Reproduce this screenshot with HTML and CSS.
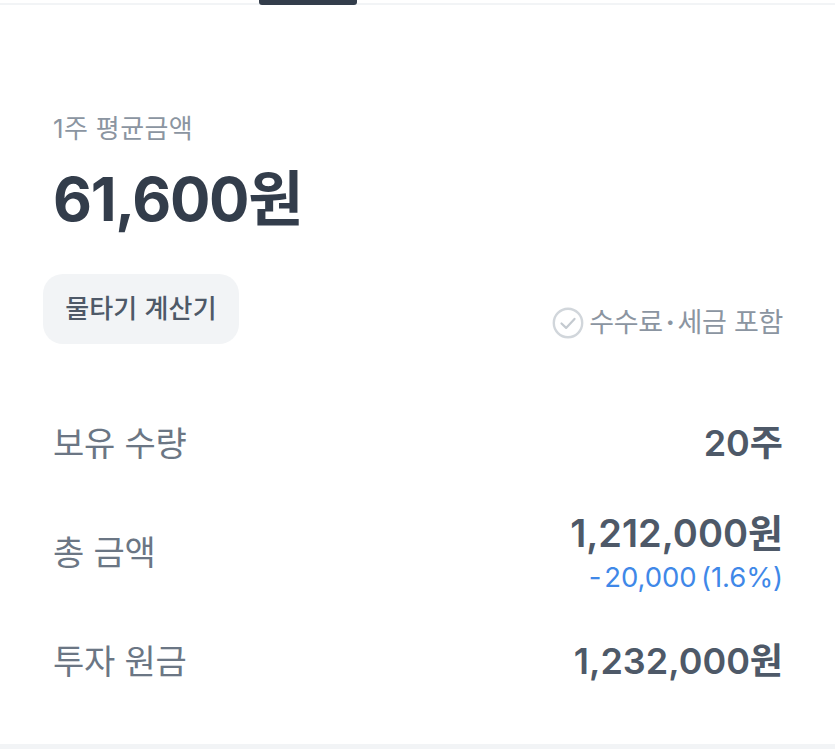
FILE: index.html
```html
<!DOCTYPE html>
<html lang="ko">
<head>
<meta charset="utf-8">
<title>1주 평균금액</title>
<link rel="stylesheet" href="styles.css">
</head>
<body>
<div class="page">
  <div class="tabbar"><div class="tab-indicator"></div></div>
  <main class="content">
    <div class="label">1주 평균금액</div>
    <div class="price">61,600원</div>
    <div class="actions">
      <button class="calc-btn">물타기 계산기</button>
      <div class="fee">
        <svg class="fee-icon" width="32" height="32" viewBox="0 0 32 32" aria-hidden="true"><circle cx="16" cy="16" r="14.2" fill="none" stroke="#d1d6db" stroke-width="2.4"/><path d="M9.5 16.5l4.6 4.4 8.4-9" fill="none" stroke="#c4cad0" stroke-width="2.2" stroke-linecap="round" stroke-linejoin="round"/></svg>
        <span>수수료<span class="fee-dot">·</span>세금 포함</span>
      </div>
    </div>
    <div class="rows">
      <div class="row row-qty">
        <div class="row-label">보유 수량</div>
        <div class="row-value">20주</div>
      </div>
      <div class="row row-total">
        <div class="row-label">총 금액</div>
        <div class="value-stack">
          <div class="row-value">1,212,000원</div>
          <div class="delta"><span class="delta-sign">-</span>20,000 (1.6%)</div>
        </div>
      </div>
      <div class="row row-principal">
        <div class="row-label">투자 원금</div>
        <div class="row-value">1,232,000원</div>
      </div>
    </div>
  </main>
  <div class="divider"></div>
</div>
</body>
</html>
```

FILE: styles.css
```css
* { box-sizing: border-box; }
html, body { margin: 0; padding: 0; background: #fff; }
body { font-family: Inter, "Noto Sans CJK KR", sans-serif; }
.page { width: 835px; height: 749px; display: flex; flex-direction: column; overflow: hidden; }
.tabbar { height: 5px; flex: none; padding-left: 259px; border-bottom: 2px solid #f2f4f6; }
.tab-indicator { width: 98px; height: 5px; background: #333d4b; border-radius: 0 0 3px 3px; }
.content { flex: 1; padding: 108px 52px 0 53px; }
.label { font-size: 26px; line-height: 32px; color: #8b95a1; letter-spacing: 0.35px; }
.price { margin-top: 18px; font-size: 60px; line-height: 72px; font-weight: 700; color: #333d4b; letter-spacing: -1.3px; }
.actions { margin-top: 39px; margin-left: -10px; display: flex; justify-content: space-between; align-items: flex-end; }
.calc-btn { width: 196px; height: 70px; border: 0; border-radius: 20px; background: #f2f4f6; color: #4e5968; font-family: inherit; font-size: 26px; font-weight: 500; padding: 0 0 5px; letter-spacing: 0.15px; }
.fee { display: flex; align-items: center; gap: 5px; padding-top: 2px; font-size: 27px; line-height: 42px; color: #8b95a1; letter-spacing: -0.3px; }
.fee-dot { margin: 0 3px; font-weight: 700; }
.fee-icon { flex: none; }
.rows { margin-top: 64px; }
.row { display: flex; justify-content: space-between; align-items: center; }
.row-qty { height: 70px; }
.row-total { height: 100px; margin-top: 25px; }
.row-principal { height: 60px; margin-top: 28px; }
.row-label { padding-top: 2px; font-size: 34px; line-height: 40px; color: #6b7684; letter-spacing: -0.2px; }
.row-total .row-label { padding-top: 0; }
.row-value { font-size: 36px; line-height: 44px; font-weight: 600; color: #4e5968; text-align: right; }
.row-total .row-value { font-size: 38px; }
.value-stack { text-align: right; margin-bottom: 3px; }
.delta { margin-top: 7px; font-size: 27.5px; line-height: 30px; color: #3f88e8; letter-spacing: -0.1px; word-spacing: -3px; }
.delta-sign { margin-right: 3px; }
.divider { height: 5px; flex: none; background: #f2f4f6; }
```
